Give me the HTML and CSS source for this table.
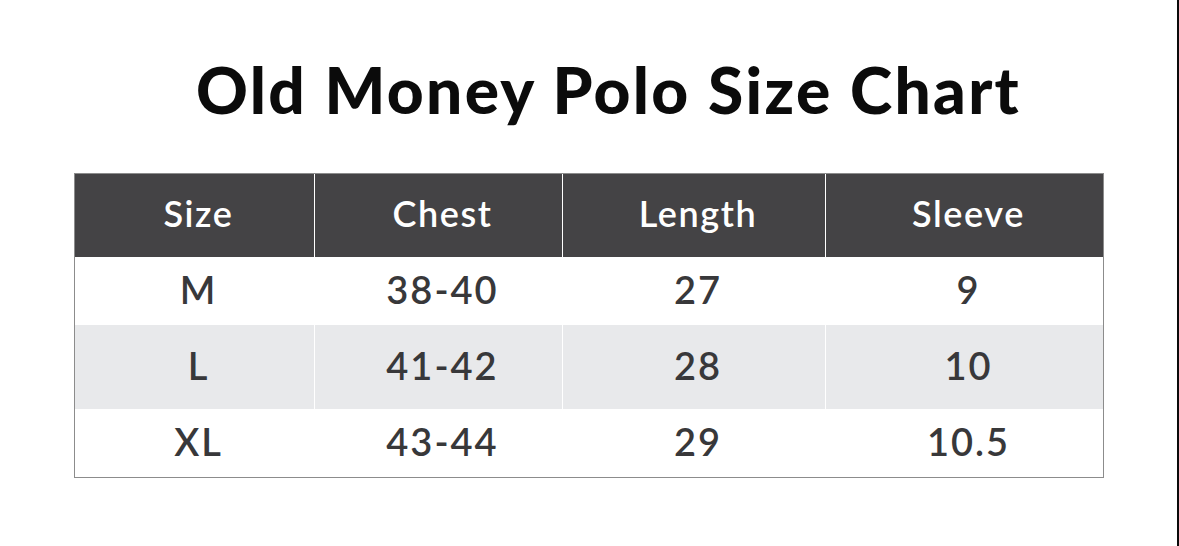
FILE: index.html
```html
<!DOCTYPE html>
<html>
<head>
<meta charset="utf-8">
<link rel="stylesheet" href="styles.css">
</head>
<body>
<div class="page">
  <h1 class="title">Old Money Polo Size Chart</h1>
  <div class="chart">
    <div class="cell head">Size</div>
    <div class="cell head">Chest</div>
    <div class="cell head">Length</div>
    <div class="cell head">Sleeve</div>

    <div class="cell">M</div>
    <div class="cell">38-40</div>
    <div class="cell">27</div>
    <div class="cell">9</div>

    <div class="cell alt">L</div>
    <div class="cell alt">41-42</div>
    <div class="cell alt">28</div>
    <div class="cell alt">10</div>

    <div class="cell">XL</div>
    <div class="cell">43-44</div>
    <div class="cell">29</div>
    <div class="cell">10.5</div>
  </div>
</div>
</body>
</html>
```

FILE: styles.css
```css
html, body {
  margin: 0;
  padding: 0;
  background: #ffffff;
}

.page {
  width: 1177px;
  height: 546px;
  border-right: 2px solid #0a0a0a;
  box-sizing: content-box;
  display: flex;
  flex-direction: column;
  font-family: "Lato", "Noto Sans", sans-serif;
}

.title {
  margin: 52px 0 0 0;
  padding-left: 40px;
  height: 121px;
  text-align: center;
  font-size: 64px;
  font-weight: 900;
  line-height: 76px;
  color: #0b0b0b;
  letter-spacing: 2.3px;
}

.chart {
  margin-left: 74px;
  width: 1028px;
  display: grid;
  grid-template-columns: 239px 247px 262px 277px;
  grid-template-rows: 83px 68px 84px 68px;
  column-gap: 1px;
  background: #ffffff;
  border: 1px solid #8c8c8c;
}

.cell {
  display: flex;
  align-items: center;
  justify-content: center;
  padding-bottom: 4px;
  padding-left: 8px;
  font-size: 38px;
  font-weight: 600;
  letter-spacing: 2px;
  color: #38383a;
  background: #ffffff;
}

.head {
  background: #444345;
  color: #ffffff;
  font-size: 36px;
  letter-spacing: 1.6px;
  padding-bottom: 6px;
}

.alt {
  background: #e8e9eb;
}
```
